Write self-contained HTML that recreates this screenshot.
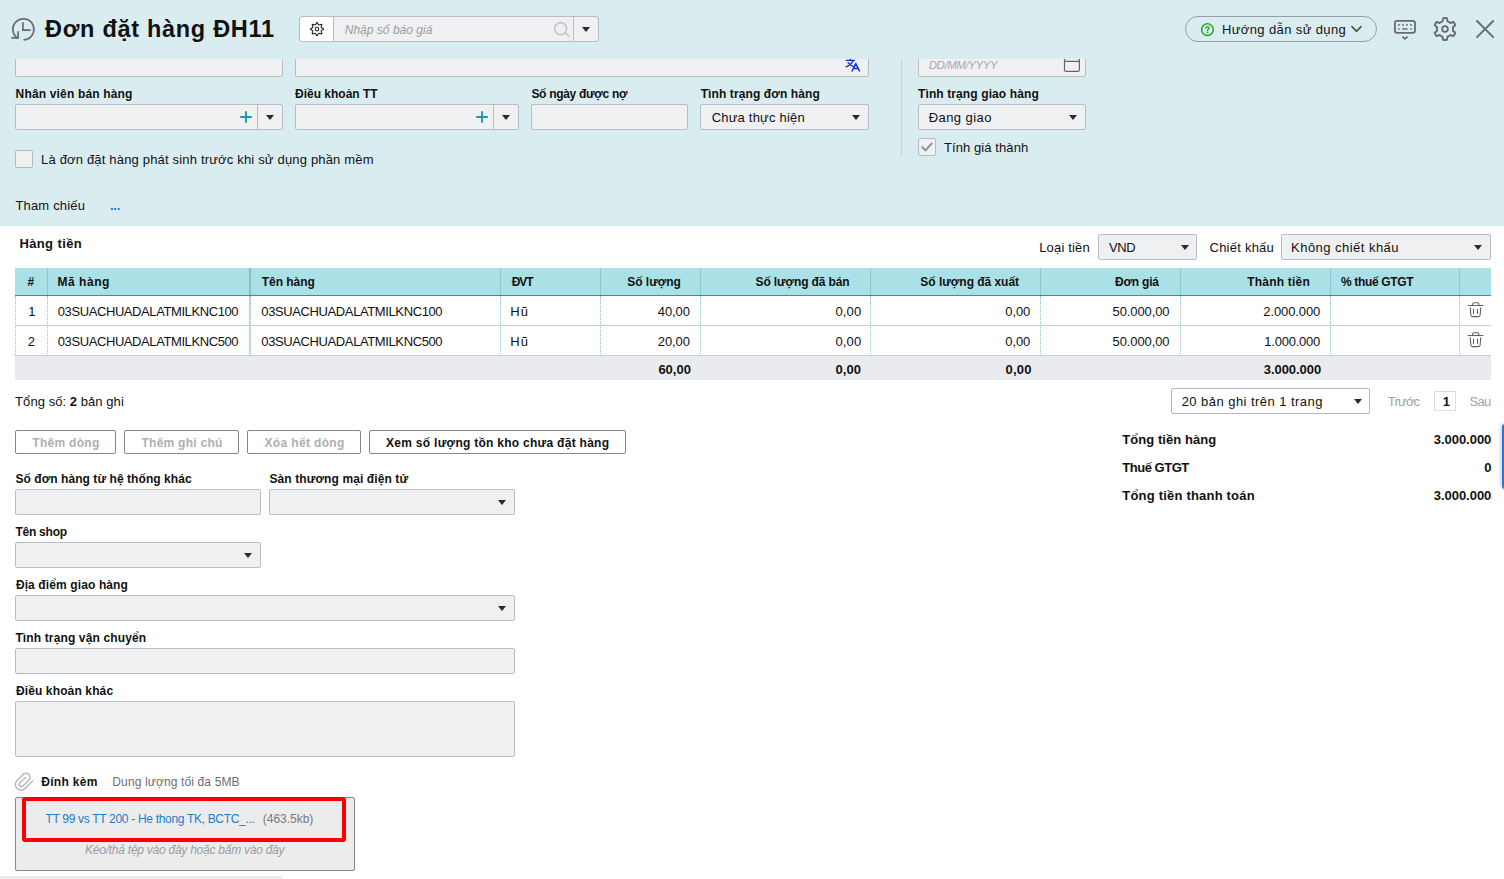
<!DOCTYPE html>
<html lang="vi">
<head>
<meta charset="utf-8">
<title>Đơn đặt hàng ĐH11</title>
<style>
*{box-sizing:border-box;margin:0;padding:0}
html,body{width:1504px;height:879px;overflow:hidden;background:#fff}
body{font-family:"Liberation Sans","DejaVu Sans",sans-serif;font-size:13px;color:#111;position:relative}
.a{position:absolute}
.t{position:absolute;white-space:nowrap;line-height:16px;height:16px;color:#111}
#top{left:0;top:0;width:1504px;height:226px;background:#d9edf1;border-bottom:1px solid #d3ebee}
.inp{position:absolute;background:#eff0f2;border:1px solid #b9bdc6;border-radius:2px;height:26px}
.wh{background:#fff}
.arr{position:absolute;width:0;height:0;border-left:4px solid transparent;border-right:4px solid transparent;border-top:5px solid #2b2b2b}
.vsep{position:absolute;top:0;bottom:0;width:1px;background:#b9bdc6}
.btn{position:absolute;top:430px;height:24px;border:1px solid #82868e;border-radius:2px;background:#fff}
.cb{position:absolute;width:18px;height:18px;border:1px solid #b5b9c1;border-radius:2px;background:#eff0f2}
.th{position:absolute;top:268px;height:28px;background:#a9e1e6;border-bottom:1px solid #10a0b1}
.hd{position:absolute;top:268px;height:27px;width:1px;background:#8fc6cc}
.vd{position:absolute;top:296px;height:60px;width:0;border-left:1px dotted #86c7d0}
.hl{position:absolute;left:15px;width:1476px;height:1px;background:#c9cbcf}

</style>
</head>
<body>
<div id="top" class="a"></div>

<!-- title bar: history icon -->
<svg class="a" style="left:4px;top:10px" width="40" height="40" viewBox="0 0 40 40" fill="none" stroke="#6c6c71" stroke-width="1.75">
  <path d="M20.1 29.8 A10.5 10.5 0 1 0 13.3 27.9" stroke-linecap="round"/>
  <path d="M7.3 27.85 H14.15 V21.3"/>
  <path d="M18.9 12.3 V20 H26.7"/>
</svg>

<!-- quote search group -->
<div class="inp wh" style="left:299px;top:16px;width:35px;height:26px;border-radius:3px 0 0 3px"></div>
<div class="inp" style="left:333px;top:16px;width:241px;height:26px;border-radius:0"></div>
<div class="inp" style="left:573px;top:16px;width:26px;height:26px;border-radius:0 3px 3px 0"></div>
<svg class="a" style="left:296px;top:12px" width="50" height="34" viewBox="0 0 50 34" fill="none" stroke="#1d1d1f" stroke-width="1.05" stroke-linejoin="round">
  <path d="M21.45 10.62L20.55 10.62L19.70 12.58L18.72 12.99L16.74 12.19L16.09 12.84L16.89 14.82L16.48 15.80L14.52 16.65L14.52 17.55L16.48 18.40L16.89 19.38L16.09 21.36L16.74 22.01L18.72 21.21L19.70 21.62L20.55 23.58L21.45 23.58L22.30 21.62L23.28 21.21L25.26 22.01L25.91 21.36L25.11 19.38L25.52 18.40L27.48 17.55L27.48 16.65L25.52 15.80L25.11 14.82L25.91 12.84L25.26 12.19L23.28 12.99L22.30 12.58Z"/>
  <circle cx="21.0" cy="17.1" r="1.8"/>
</svg>
<svg class="a" style="left:552px;top:20px" width="20" height="18" viewBox="0 0 20 18" fill="none" stroke="#c3c5c9" stroke-width="1.6" stroke-linecap="round">
  <circle cx="8.6" cy="8.6" r="6"/><path d="M13.2 13 L17 16"/>
</svg>
<div class="arr" style="left:582px;top:27px"></div>

<!-- help pill -->
<div class="a" style="left:1185px;top:16px;width:192px;height:26px;border:1px solid #9a9da3;border-radius:13px"></div>
<svg class="a" style="left:1200px;top:22px" width="15" height="15" viewBox="0 0 15 15" fill="none">
  <circle cx="7.45" cy="7.6" r="5.85" stroke="#28a428" stroke-width="1.5"/>
  <path d="M5.900 6.200c0-1 .700-1.600 1.600-1.600s1.600.600 1.600 1.500c0 1.200-1.550 1.250-1.550 2.500" stroke="#28a428" stroke-width="1.3" stroke-linecap="round"/>
  <circle cx="7.500" cy="10.400" r=".8" fill="#28a428"/>
</svg>
<svg class="a" style="left:1350px;top:24px" width="13" height="10" viewBox="0 0 13 10" fill="none" stroke="#555" stroke-width="1.7" stroke-linecap="round" stroke-linejoin="round"><path d="M2 2.7 L6.5 7.3 L11 2.7"/></svg>

<!-- keyboard / settings / close icons -->
<svg class="a" style="left:1384px;top:10px" width="120" height="40" viewBox="0 0 120 40" fill="none" stroke="#6a6a6e" stroke-width="1.8" stroke-linejoin="round">
  <rect x="10.9" y="10.9" width="20.1" height="12" rx="2.3"/>
  <path d="M14.1 14.9h1.6M18.1 14.9h1.6M22.2 14.9h1.6M26.2 14.9h1.6M14.1 19h1.6M18.2 19h5.4M26.2 19h1.6" stroke-width="1.6"/>
  <path d="M18.4 26.6 L20.95 28.9 L23.5 26.6"/>
  <path d="M63.50 11.30L62.91 8.17A11.0 11.0 0 0 0 59.09 8.17L58.50 11.30A8.1 8.1 0 0 0 55.58 12.98L52.57 11.93A11.0 11.0 0 0 0 50.66 15.24L53.08 17.32A8.1 8.1 0 0 0 53.08 20.68L50.66 22.76A11.0 11.0 0 0 0 52.57 26.07L55.58 25.02A8.1 8.1 0 0 0 58.50 26.70L59.09 29.83A11.0 11.0 0 0 0 62.91 29.83L63.50 26.70A8.1 8.1 0 0 0 66.42 25.02L69.43 26.07A11.0 11.0 0 0 0 71.34 22.76L68.92 20.68A8.1 8.1 0 0 0 68.92 17.32L71.34 15.24A11.0 11.0 0 0 0 69.43 11.93L66.42 12.98A8.1 8.1 0 0 0 63.50 11.30Z" stroke-width="1.9"/>
  <circle cx="61" cy="19" r="2.85"/>
  <path d="M93 11 L109.2 27.2 M109.2 11 L93 27.2" stroke-width="1.9" stroke-linecap="round"/>
</svg>

<!-- row 1 (clipped by sticky title) -->
<div class="inp" style="left:15px;top:50px;width:268px;height:27px"></div>
<div class="inp" style="left:295px;top:50px;width:574px;height:27px"></div>
<div class="inp" style="left:918px;top:50px;width:168px;height:27px"></div>
<div class="a" style="left:0;top:44px;width:1504px;height:15px;background:#d9edf1"></div>
<div class="a" style="left:901px;top:59px;width:1px;height:97px;background:#c3d3d8"></div>
<!-- translate icon -->
<svg class="a" style="left:836px;top:52px" width="40" height="30" viewBox="0 0 40 30" fill="none" stroke="#0c30d6" stroke-width="1.35" stroke-linecap="round" stroke-linejoin="round">
  <path d="M10.400 8.400H18.300M14.300 7.500V8.400M17.100 8.900Q14.600 13.400 10 14.800M12 10.700Q14 13.400 17.300 14.600"/>
  <path d="M16.100 19L19.800 11.600L23.400 19M17.800 16.400H21.900" stroke-width="1.5"/>
</svg>
<!-- calendar icon -->
<svg class="a" style="left:1050px;top:52px" width="50" height="30" viewBox="0 0 50 30" fill="none" stroke="#63656b" stroke-width="1.2">
  <path d="M14.500 7V17.900Q14.500 19.400 16 19.400H27.900Q29.400 19.400 29.400 17.900V7M14.500 9.400H29.400"/>
</svg>

<!-- row 2 inputs -->
<div class="inp" style="left:15px;top:104px;width:268px"><div class="vsep" style="left:241px"></div></div>
<svg class="a" style="left:239px;top:110px" width="14" height="14" viewBox="0 0 14 14" stroke="#1899a8" stroke-width="1.9"><path d="M7 1.2v11.6M1.2 7h11.6"/></svg>
<div class="arr" style="left:266px;top:115px"></div>
<div class="inp" style="left:295px;top:104px;width:224px"><div class="vsep" style="left:197px"></div></div>
<svg class="a" style="left:475px;top:110px" width="14" height="14" viewBox="0 0 14 14" stroke="#1899a8" stroke-width="1.9"><path d="M7 1.2v11.6M1.2 7h11.6"/></svg>
<div class="arr" style="left:502px;top:115px"></div>
<div class="inp" style="left:531px;top:104px;width:157px"></div>
<div class="inp" style="left:700px;top:104px;width:169px"></div>
<div class="arr" style="left:852px;top:115px"></div>
<div class="inp" style="left:918px;top:104px;width:168px"></div>
<div class="arr" style="left:1069px;top:115px"></div>

<!-- checkboxes -->
<div class="cb" style="left:15px;top:150px"></div>
<div class="cb" style="left:918px;top:138px"></div>
<svg class="a" style="left:921px;top:141px" width="12" height="12" viewBox="0 0 12 12" fill="none" stroke="#8b8e93" stroke-width="2" stroke-linecap="round" stroke-linejoin="round"><path d="M1.4 6.3 L4.5 9.4 L10.6 2.6"/></svg>

<!-- currency / discount -->
<div class="inp" style="left:1098px;top:234px;width:99px"></div>
<div class="arr" style="left:1181px;top:245px"></div>
<div class="inp" style="left:1281px;top:234px;width:210px"></div>
<div class="arr" style="left:1474px;top:245px"></div>

<!-- grid -->
<div class="th" style="left:15px;width:1476px"></div>
<div class="hd" style="left:47px"></div><div class="hd" style="left:250px;width:2px;left:249px;background:#86bfc6"></div><div class="hd" style="left:500px"></div>
<div class="hd" style="left:600px"></div><div class="hd" style="left:700px"></div><div class="hd" style="left:870px"></div>
<div class="hd" style="left:1040px"></div><div class="hd" style="left:1180px"></div><div class="hd" style="left:1330px"></div><div class="hd" style="left:1459px"></div>
<div class="hl" style="top:325px"></div>
<div class="a" style="left:15px;top:355px;width:1476px;height:25px;background:#e9ebef;border-top:1px solid #c9cbcf"></div>
<div class="vd" style="left:15px"></div><div class="vd" style="left:47px"></div>
<div class="a" style="left:249px;top:296px;width:1px;height:59px;background:#a6d8de"></div><div class="vd" style="left:250px"></div>
<div class="vd" style="left:500px"></div><div class="vd" style="left:600px"></div><div class="vd" style="left:700px"></div>
<div class="vd" style="left:870px"></div><div class="vd" style="left:1040px"></div><div class="vd" style="left:1180px"></div>
<div class="vd" style="left:1330px"></div><div class="vd" style="left:1459px"></div>
<!-- trash icons -->
<svg class="a" style="left:1455px;top:296px" width="40" height="30" viewBox="0 0 40 30" fill="none" stroke="#606268" stroke-width="1.1" stroke-linecap="round" stroke-linejoin="round"><path d="M13.1 9.5H27.9M17.7 9.3V7.9Q17.7 6.7 18.9 6.7H22.6Q23.8 6.7 23.8 7.900V9.3M15.300 11.900L15.850 19Q16 20.600 17.600 20.600H23.400Q25 20.600 25.150 19L25.700 11.900M18.500 13.300V17.600M22.500 13.300V17.600"/></svg>
<svg class="a" style="left:1455px;top:326px" width="40" height="30" viewBox="0 0 40 30" fill="none" stroke="#606268" stroke-width="1.1" stroke-linecap="round" stroke-linejoin="round"><path d="M13.1 9.5H27.9M17.7 9.3V7.9Q17.7 6.7 18.9 6.7H22.6Q23.8 6.7 23.8 7.900V9.3M15.300 11.900L15.850 19Q16 20.600 17.600 20.600H23.400Q25 20.600 25.150 19L25.700 11.900M18.500 13.300V17.600M22.500 13.300V17.600"/></svg>

<!-- pager -->
<div class="inp wh" style="left:1171px;top:388px;width:199px;border-color:#b3b7c2"></div>
<div class="arr" style="left:1354px;top:399px"></div>
<div class="a" style="left:1434px;top:391px;width:22px;height:20px;border:1px solid #dcdde0;background:#fff"></div>

<!-- buttons -->
<div class="btn" style="left:15px;width:101px"></div>
<div class="btn" style="left:124px;width:115px"></div>
<div class="btn" style="left:247px;width:114px"></div>
<div class="btn" style="left:369px;width:257px"></div>

<!-- side tab -->
<div class="a" style="left:1502px;top:424px;width:6px;height:65px;background:#2378e8;border-radius:3px;box-shadow:-1px 0 4px rgba(0,0,0,.22)"></div>

<!-- lower form -->
<div class="inp" style="left:15px;top:489px;width:246px"></div>
<div class="inp" style="left:269px;top:489px;width:246px"></div>
<div class="arr" style="left:498px;top:500px"></div>
<div class="inp" style="left:15px;top:542px;width:246px"></div>
<div class="arr" style="left:244px;top:553px"></div>
<div class="inp" style="left:15px;top:595px;width:500px"></div>
<div class="arr" style="left:498px;top:606px"></div>
<div class="inp" style="left:15px;top:648px;width:500px"></div>
<div class="inp" style="left:15px;top:701px;width:500px;height:56px"></div>

<!-- attachment -->
<svg class="a" style="left:8px;top:766px" width="40" height="30" viewBox="0 0 40 30" fill="none" stroke="#b2b7c1" stroke-width="1.45" stroke-linecap="round">
  <path d="M24.6 15 L17.2 22.6 A5.76 5.76 0 0 1 9.03 14.43 L15.15 8.45 A4.03 4.03 0 0 1 20.85 14.15 L14.9 20.1 A2.12 2.12 0 0 1 11.9 17.1 L17.4 11.6"/>
</svg>
<div class="a" style="left:15px;top:797px;width:340px;height:74px;background:#ececed;border:1px solid #85888e;border-radius:2px"></div>
<div class="a" style="left:22px;top:797px;width:324px;height:45px;border:4px solid #fb0000;border-radius:3px"></div>

<!-- horizontal scrollbar stub -->
<div class="a" style="left:-10px;top:876px;width:293px;height:8px;background:#ebecee;border-radius:5px"></div>

<!-- text layer -->
<div class="t" style="left:45.00px;top:14px;font-size:23.5px;line-height:30px;height:30px;font-weight:bold;letter-spacing:0.705px;">Đơn đặt hàng ĐH11</div>
<div class="t" style="left:344.70px;top:22px;font-size:12px;font-style:italic;color:#9b9da1;letter-spacing:0.023px;">Nhập số báo giá</div>
<div class="t" style="left:1221.89px;top:22px;font-size:13px;letter-spacing:0.388px;">Hướng dẫn sử dụng</div>
<div class="t" style="left:928.70px;top:57px;font-size:11.5px;font-style:italic;color:#a9abb0;letter-spacing:-0.440px;">DD/MM/YYYY</div>
<div class="t" style="left:15.60px;top:86px;font-size:12px;font-weight:bold;letter-spacing:0.166px;">Nhân viên bán hàng</div>
<div class="t" style="left:295.00px;top:86px;font-size:12px;font-weight:bold;">Điều khoản TT</div>
<div class="t" style="left:531.40px;top:86px;font-size:12px;font-weight:bold;letter-spacing:-0.307px;">Số ngày được nợ</div>
<div class="t" style="left:700.70px;top:86px;font-size:12px;font-weight:bold;letter-spacing:0.103px;">Tình trạng đơn hàng</div>
<div class="t" style="left:918.00px;top:86px;font-size:12px;font-weight:bold;letter-spacing:0.109px;">Tình trạng giao hàng</div>
<div class="t" style="left:711.70px;top:110px;font-size:13px;letter-spacing:0.195px;">Chưa thực hiện</div>
<div class="t" style="left:928.70px;top:110px;font-size:13px;letter-spacing:0.433px;">Đang giao</div>
<div class="t" style="left:41.06px;top:152px;font-size:13px;letter-spacing:0.176px;">Là đơn đặt hàng phát sinh trước khi sử dụng phần mềm</div>
<div class="t" style="left:944.00px;top:140px;font-size:13px;letter-spacing:0.086px;">Tính giá thành</div>
<div class="t" style="left:15.40px;top:198px;font-size:13px;letter-spacing:0.188px;">Tham chiếu</div>
<div class="t" style="left:110.00px;top:198px;font-size:13px;font-weight:bold;color:#1f6fd6;letter-spacing:-0.262px;">...</div>
<div class="t" style="left:19.40px;top:236px;font-size:13px;font-weight:bold;letter-spacing:0.387px;">Hàng tiền</div>
<div class="t" style="left:1039.20px;top:240px;font-size:13px;letter-spacing:0.173px;">Loại tiền</div>
<div class="t" style="left:1109.00px;top:240px;font-size:13px;letter-spacing:-0.380px;">VND</div>
<div class="t" style="left:1209.51px;top:240px;font-size:13px;letter-spacing:0.238px;">Chiết khấu</div>
<div class="t" style="left:1291.10px;top:240px;font-size:13px;letter-spacing:0.464px;">Không chiết khấu</div>
<div class="t" style="left:27.50px;top:274px;font-size:12px;font-weight:bold;">#</div>
<div class="t" style="left:57.51px;top:274px;font-size:12px;font-weight:bold;letter-spacing:0.535px;">Mã hàng</div>
<div class="t" style="left:261.72px;top:274px;font-size:12px;font-weight:bold;letter-spacing:-0.019px;">Tên hàng</div>
<div class="t" style="left:511.72px;top:274px;font-size:12px;font-weight:bold;letter-spacing:-1.070px;">ĐVT</div>
<div class="t" style="left:627.34px;top:274px;font-size:12px;font-weight:bold;letter-spacing:-0.046px;">Số lượng</div>
<div class="t" style="left:755.60px;top:274px;font-size:12px;font-weight:bold;letter-spacing:-0.133px;">Số lượng đã bán</div>
<div class="t" style="left:920.34px;top:274px;font-size:12px;font-weight:bold;letter-spacing:-0.035px;">Số lượng đã xuất</div>
<div class="t" style="left:1115.00px;top:274px;font-size:12px;font-weight:bold;letter-spacing:-0.204px;">Đơn giá</div>
<div class="t" style="left:1247.30px;top:274px;font-size:12px;font-weight:bold;letter-spacing:0.208px;">Thành tiền</div>
<div class="t" style="left:1341.00px;top:274px;font-size:12px;font-weight:bold;letter-spacing:-0.337px;">% thuế GTGT</div>
<div class="t" style="left:28.30px;top:304px;font-size:13px;">1</div>
<div class="t" style="left:57.80px;top:304px;font-size:13px;letter-spacing:-0.411px;">03SUACHUADALATMILKNC100</div>
<div class="t" style="left:261.30px;top:304px;font-size:13px;letter-spacing:-0.386px;">03SUACHUADALATMILKNC100</div>
<div class="t" style="left:510.30px;top:304px;font-size:13px;letter-spacing:1.112px;">Hũ</div>
<div class="t" style="left:657.80px;top:304px;font-size:13px;letter-spacing:-0.100px;">40,00</div>
<div class="t" style="left:835.40px;top:304px;font-size:13px;letter-spacing:0.153px;">0,00</div>
<div class="t" style="left:1005.30px;top:304px;font-size:13px;letter-spacing:-0.124px;">0,00</div>
<div class="t" style="left:1112.51px;top:304px;font-size:13px;letter-spacing:-0.100px;">50.000,00</div>
<div class="t" style="left:1263.30px;top:304px;font-size:13px;letter-spacing:-0.100px;">2.000.000</div>
<div class="t" style="left:27.70px;top:334px;font-size:13px;">2</div>
<div class="t" style="left:57.80px;top:334px;font-size:13px;letter-spacing:-0.411px;">03SUACHUADALATMILKNC500</div>
<div class="t" style="left:261.30px;top:334px;font-size:13px;letter-spacing:-0.386px;">03SUACHUADALATMILKNC500</div>
<div class="t" style="left:510.30px;top:334px;font-size:13px;letter-spacing:1.112px;">Hũ</div>
<div class="t" style="left:657.80px;top:334px;font-size:13px;letter-spacing:-0.100px;">20,00</div>
<div class="t" style="left:835.40px;top:334px;font-size:13px;letter-spacing:0.153px;">0,00</div>
<div class="t" style="left:1005.30px;top:334px;font-size:13px;letter-spacing:-0.124px;">0,00</div>
<div class="t" style="left:1112.51px;top:334px;font-size:13px;letter-spacing:-0.100px;">50.000,00</div>
<div class="t" style="left:1264.30px;top:334px;font-size:13px;letter-spacing:-0.225px;">1.000.000</div>
<div class="t" style="left:658.40px;top:362px;font-size:13px;font-weight:bold;">60,00</div>
<div class="t" style="left:835.60px;top:362px;font-size:13px;font-weight:bold;letter-spacing:0.009px;">0,00</div>
<div class="t" style="left:1005.50px;top:362px;font-size:13px;font-weight:bold;letter-spacing:0.266px;">0,00</div>
<div class="t" style="left:1263.70px;top:362px;font-size:13px;font-weight:bold;letter-spacing:-0.038px;">3.000.000</div>
<div class="t" style="left:15.10px;top:394px;font-size:13px;letter-spacing:0.059px;">Tổng số: <b>2</b> bản ghi</div>
<div class="t" style="left:1181.68px;top:394px;font-size:13px;letter-spacing:0.453px;">20 bản ghi trên 1 trang</div>
<div class="t" style="left:1387.80px;top:394px;font-size:13px;color:#a0a2a6;letter-spacing:-0.804px;">Trước</div>
<div class="t" style="left:1442.80px;top:394px;font-size:13px;font-weight:bold;">1</div>
<div class="t" style="left:1469.60px;top:394px;font-size:13px;color:#a0a2a6;letter-spacing:-0.700px;">Sau</div>
<div class="t" style="left:32.30px;top:435px;font-size:12px;font-weight:bold;color:#adafb4;letter-spacing:0.296px;">Thêm dòng</div>
<div class="t" style="left:141.50px;top:435px;font-size:12px;font-weight:bold;color:#adafb4;letter-spacing:0.257px;">Thêm ghi chú</div>
<div class="t" style="left:264.50px;top:435px;font-size:12px;font-weight:bold;color:#adafb4;letter-spacing:0.349px;">Xóa hết dòng</div>
<div class="t" style="left:386.10px;top:435px;font-size:12px;font-weight:bold;letter-spacing:0.273px;">Xem số lượng tồn kho chưa đặt hàng</div>
<div class="t" style="left:1122.30px;top:432px;font-size:13px;font-weight:bold;letter-spacing:0.053px;">Tổng tiền hàng</div>
<div class="t" style="left:1122.30px;top:460px;font-size:13px;font-weight:bold;letter-spacing:-0.479px;">Thuế GTGT</div>
<div class="t" style="left:1122.30px;top:488px;font-size:13px;font-weight:bold;letter-spacing:0.200px;">Tổng tiền thanh toán</div>
<div class="t" style="left:1433.70px;top:432px;font-size:13px;font-weight:bold;letter-spacing:-0.025px;">3.000.000</div>
<div class="t" style="left:1484.20px;top:460px;font-size:13px;font-weight:bold;">0</div>
<div class="t" style="left:1433.70px;top:488px;font-size:13px;font-weight:bold;letter-spacing:-0.025px;">3.000.000</div>
<div class="t" style="left:15.40px;top:471px;font-size:12px;font-weight:bold;letter-spacing:0.062px;">Số đơn hàng từ hệ thống khác</div>
<div class="t" style="left:269.40px;top:471px;font-size:12px;font-weight:bold;letter-spacing:0.102px;">Sàn thương mại điện tử</div>
<div class="t" style="left:15.40px;top:524px;font-size:12px;font-weight:bold;letter-spacing:-0.235px;">Tên shop</div>
<div class="t" style="left:15.89px;top:577px;font-size:12px;font-weight:bold;letter-spacing:0.118px;">Địa điểm giao hàng</div>
<div class="t" style="left:15.40px;top:630px;font-size:12px;font-weight:bold;letter-spacing:0.134px;">Tình trạng vận chuyển</div>
<div class="t" style="left:15.89px;top:683px;font-size:12px;font-weight:bold;letter-spacing:0.132px;">Điều khoản khác</div>
<div class="t" style="left:41.20px;top:774px;font-size:12px;font-weight:bold;letter-spacing:0.323px;">Đính kèm</div>
<div class="t" style="left:112.34px;top:774px;font-size:12px;color:#6b6d72;letter-spacing:0.130px;">Dung lượng tối đa 5MB</div>
<div class="t" style="left:45.50px;top:811px;font-size:12px;color:#1b7ec9;letter-spacing:-0.313px;">TT 99 vs TT 200 - He thong TK, BCTC_...</div>
<div class="t" style="left:262.80px;top:811px;font-size:12px;color:#777a80;letter-spacing:-0.025px;">(463.5kb)</div>
<div class="t" style="left:85.10px;top:842px;font-size:12px;font-style:italic;color:#9b9da1;letter-spacing:-0.250px;">Kéo/thả tệp vào đây hoặc bấm vào đây</div>
</body>
</html>
